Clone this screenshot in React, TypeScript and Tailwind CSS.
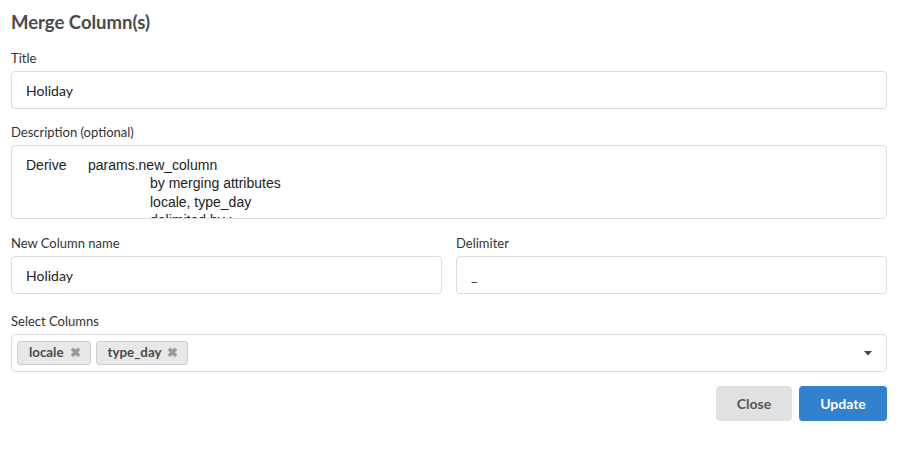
import React from "react";

const lato = { fontFamily: "Lato, 'Open Sans', sans-serif" };

function Label({ children }: { children: React.ReactNode }) {
  return <div className="text-[13px] leading-[18px] text-[#333] mb-[4px]">{children}</div>;
}

function Input({ value }: { value: string }) {
  return (
    <div className="h-[38px] border border-[#dcdcdc] rounded-[4px] bg-white flex items-center px-[14px] text-[14px] text-[#222]">
      {value}
    </div>
  );
}

function Chip({ label }: { label: string }) {
  return (
    <div className="h-[24px] flex items-center gap-[6px] pl-[11px] pr-[9px] bg-[#e8e8e8] border border-[#cfcfcf] rounded-[3px] text-[13.3px] font-bold text-[#4a4a4a]">
      <span>{label}</span>
      <span className="text-[#999] text-[12.5px] leading-none">✖</span>
    </div>
  );
}

export default function App() {
  return (
    <div className="w-[899px] h-[455px] bg-white pl-[11px] pr-[12px] pt-[10px]" style={lato}>
      <div className="text-[18.5px] leading-[24px] font-bold text-[#4a4a4a]">Merge Column(s)</div>
      <div className="mt-[15px]">
        <Label>Title</Label>
        <Input value="Holiday" />
      </div>
      <div className="mt-[14px]">
        <Label>Description (optional)</Label>
        <div
          className="h-[74px] overflow-hidden border border-[#dcdcdc] rounded-[4px] bg-white pl-[14px] pt-[10px] text-[14px] leading-[18.3px] text-[#222]"
          style={{ fontFamily: "'Liberation Sans', Arial, sans-serif" }}
        >
          <div className="flex">
            <span className="w-[62px]">Derive</span>
            <span>params.new_column</span>
          </div>
          <div className="pl-[124px]">by merging attributes</div>
          <div className="pl-[124px]">locale, type_day</div>
          <div className="pl-[124px]">delimited by :</div>
        </div>
      </div>
      <div className="mt-[15px] grid grid-cols-2 gap-[14px]">
        <div>
          <Label>New Column name</Label>
          <Input value="Holiday" />
        </div>
        <div>
          <Label>Delimiter</Label>
          <Input value="_" />
        </div>
      </div>
      <div className="mt-[18px]">
        <Label>Select Columns</Label>
        <div className="h-[38px] border border-[#dcdcdc] rounded-[4px] bg-white flex items-center pl-[5px] pr-[14px]">
          <div className="flex gap-[5px]">
            <Chip label="locale" />
            <Chip label="type_day" />
          </div>
          <div className="flex-1" />
          <svg width="8" height="5" viewBox="0 0 8 5">
            <path d="M0 0 L8 0 L4 4.5 Z" fill="#444" />
          </svg>
        </div>
      </div>
      <div className="mt-[14px] flex justify-end gap-[7px]">
        <button className="h-[35px] w-[76px] rounded-[4px] bg-[#e0e1e2] text-[14px] font-bold text-[#555]">Close</button>
        <button className="h-[35px] w-[88px] rounded-[4px] bg-[#3182ce] text-[14px] font-bold text-white">Update</button>
      </div>
    </div>
  );
}
